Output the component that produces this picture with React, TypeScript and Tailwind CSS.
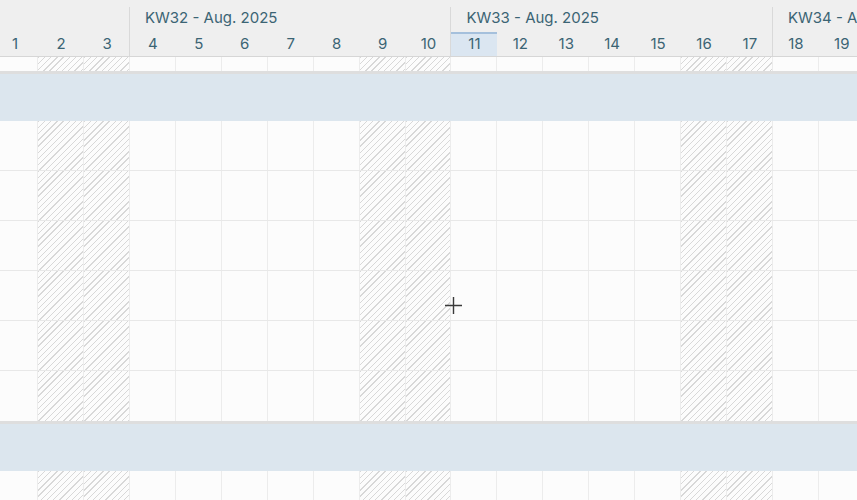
const weeks = [
  { kw: 31, label: "", days: [1, 2, 3], weekendFrom: 1 },
  { kw: 32, label: "KW32 - Aug. 2025", days: [4, 5, 6, 7, 8, 9, 10], weekendFrom: 5 },
  { kw: 33, label: "KW33 - Aug. 2025", days: [11, 12, 13, 14, 15, 16, 17], weekendFrom: 5 },
  { kw: 34, label: "KW34 - Aug. 2025", days: [18, 19], weekendFrom: 5 },
];

const TODAY = 11;
const hatch =
  "bg-[repeating-linear-gradient(135deg,#d8d8d8_0_1px,transparent_1px_4.4px)]";

function DayCells({ height }: { height: string }) {
  return (
    <div className="flex">
      {weeks.map((w) =>
        w.days.map((d, i) => (
          <div
            key={d}
            className={`w-[45.93px] shrink-0 border-r border-[#ececec] ${height} ${
              i >= w.weekendFrom ? hatch : ""
            }`}
          />
        ))
      )}
    </div>
  );
}

function Band() {
  return <div className="h-[50px] border-t-[3px] border-[#dedede] bg-[#dce6ee]" />;
}

export default function App() {
  return (
    <div
      className="relative h-[500px] w-[857px] overflow-hidden bg-[#fcfcfc]"
      style={{ fontFamily: "Inter, 'Noto Sans', sans-serif" }}
    >
      <div className="-ml-[7.8px] w-[900px]">
        {/* header */}
        <div className="flex h-[57px] border-b border-[#d6d6d6] bg-[#efefef]">
          {weeks.map((w) => (
            <div key={w.kw} className="shrink-0 pt-[7px]">
              <div className={`h-full ${w.label ? "-ml-px border-l border-[#d9d9d9]" : ""}`}>
                <div className="h-[25px] whitespace-nowrap pl-[15px] text-[15px] leading-[22px] text-[#3b6474]">
                  {w.label}
                </div>
                <div className="flex h-[24px]">
                  {w.days.map((d) => (
                    <div
                      key={d}
                      className={`flex w-[45.93px] shrink-0 items-center justify-center text-[15px] text-[#3b6474] ${
                        d === TODAY ? "border-t-2 border-[#a5c0dc] bg-[#dbe6f1] pb-[2px]" : ""
                      }`}
                    >
                      {d}
                    </div>
                  ))}
                </div>
              </div>
            </div>
          ))}
        </div>

        {/* body */}
        <DayCells height="h-[14px]" />
        <Band />
        {[0, 1, 2, 3, 4, 5].map((r) => (
          <div key={r} className={r < 5 ? "border-b border-[#e8e8e8]" : ""}>
            <DayCells height={r < 5 ? "h-[49px]" : "h-[50px]"} />
          </div>
        ))}
        <Band />
        <DayCells height="h-[50px]" />
      </div>

      {/* crosshair cursor */}
      <svg
        className="absolute left-[445px] top-[297px]"
        width="17"
        height="17"
        viewBox="0 0 17 17"
      >
        <path d="M8.5 0v17M0 8.5h17" stroke="#3a3a3a" strokeWidth="1.4" />
      </svg>
    </div>
  );
}
